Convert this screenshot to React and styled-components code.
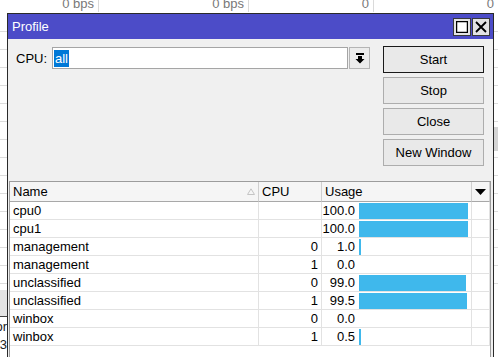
import React from 'react';
import styled, { createGlobalStyle } from 'styled-components';

const GlobalStyle = createGlobalStyle`
    html, body {
        margin: 0;
        padding: 0;
        background: #fff;
        overflow: hidden;
    }
    body {
        font-family: "Liberation Sans", Arial, sans-serif;
        font-size: 13px;
        color: #000;
    }
`;

const Desktop = styled.div`
    position: relative;
    width: 498px;
    height: 357px;
    overflow: hidden;
    background:
        repeating-linear-gradient(to bottom, transparent 0 17px, #dcdcdc 17px 18px) 0 14px / 100% 272px no-repeat,
        #fff;
`;

const BackHeader = styled.div`
    display: flex;
    height: 12px;
    overflow: hidden;
`;

const BackCell = styled.div`
    width: ${p => p.w}px;
    flex: none;
    box-sizing: border-box;
    text-align: right;
    padding-right: 4px;
    border-right: 1px solid #dadada;
    color: #777;
    line-height: 13px;
    margin-top: -3px;
`;

const BackBlock = styled.div`
    position: absolute;
    left: ${p => p.x}px;
    top: ${p => p.y}px;
    width: ${p => p.w}px;
    height: ${p => p.h}px;
    background: ${p => p.bg || '#d6d6d6'};
`;

const BackText = styled.div`
    position: absolute;
    left: 0;
    top: ${p => p.y}px;
    width: 7px;
    overflow: hidden;
    white-space: nowrap;
    direction: rtl;
    color: #222;
    line-height: 14px;
`;

const Window = styled.div`
    position: absolute;
    left: 7px;
    top: 13px;
    width: 487px;
    height: 370px;
    box-sizing: border-box;
    border: 1px solid #2a2a2a;
    background: #f0f0f0;
    display: flex;
    flex-direction: column;
`;

const TitleBar = styled.div`
    height: 25px;
    flex: none;
    background: #4c4cc8;
    color: #fff;
    display: flex;
    align-items: center;
    padding: 0 3px 0 4px;
`;

const Title = styled.span`
    flex: 1;
`;

const TitleButton = styled.div`
    width: 18px;
    height: 18px;
    box-sizing: border-box;
    border: 1px solid #3a3a3a;
    background: #e4e4e4;
    display: flex;
    align-items: center;
    justify-content: center;
    margin-left: 1px;
`;

const Body = styled.div`
    display: flex;
    padding: 7px 8px 0 8px;
    height: 142px;
    box-sizing: border-box;
`;

const Left = styled.div`
    flex: 1;
`;

const CpuRow = styled.div`
    display: flex;
    align-items: center;
    padding-top: 1px;
`;

const Label = styled.span`
    width: 36px;
`;

const Input = styled.div`
    width: 296px;
    height: 22px;
    box-sizing: border-box;
    border: 1px solid #a5a5a5;
    background: #fff;
    display: flex;
    align-items: center;
    padding-left: 1px;
`;

const Selected = styled.span`
    background: #0078d7;
    color: #fff;
    line-height: 17px;
    padding: 0 1px;
`;

const DropButton = styled.div`
    width: 21px;
    height: 22px;
    box-sizing: border-box;
    margin-left: 1px;
    border: 1px solid #b5b5b5;
    background: #ececec;
    display: flex;
    align-items: center;
    justify-content: center;
`;

const Buttons = styled.div`
    width: 101px;
    margin-right: 1px;
    display: flex;
    flex-direction: column;
    gap: 4px;
`;

const Button = styled.div`
    height: 27px;
    box-sizing: border-box;
    border: 1px solid ${p => (p.primary ? '#1a1a1a' : '#adadad')};
    background: #e9e9e9;
    display: flex;
    align-items: center;
    justify-content: center;
`;

const Table = styled.div`
    margin: 0 2px 0 1px;
    flex: 1;
    border: 1px solid #9c9c9c;
    border-bottom: none;
    background: #fff;
`;

const Grid = styled.div`
    display: grid;
    grid-template-columns: 249px 63px 150px 1fr;
`;

const HeadCell = styled.div`
    height: 20px;
    box-sizing: border-box;
    background: #f5f5f5;
    border-bottom: 1px solid #a8a8a8;
    border-right: 1px solid #cfcfcf;
    display: flex;
    align-items: center;
    padding: 0 3px;
    justify-content: ${p => p.center ? 'center' : 'space-between'};
    &:last-child { border-right: none; }
`;

const Cell = styled.div`
    height: 18px;
    box-sizing: border-box;
    border-bottom: 1px solid #e2e2e2;
    border-right: 1px solid #e2e2e2;
    display: flex;
    align-items: center;
    padding: 0 3px;
    justify-content: ${p => p.right ? 'flex-end' : 'flex-start'};
`;

const UsageCell = styled(Cell)`
    padding: 0;
`;

const Num = styled.span`
    width: 33px;
    text-align: right;
`;

const Bar = styled.div`
    height: 16px;
    margin-left: 4px;
    background: #3fb8ec;
`;

const rows = [
    { name: 'cpu0', cpu: '', usage: 100.0, bar: 109 },
    { name: 'cpu1', cpu: '', usage: 100.0, bar: 109 },
    { name: 'management', cpu: '0', usage: 1.0, bar: 2 },
    { name: 'management', cpu: '1', usage: 0.0, bar: 0 },
    { name: 'unclassified', cpu: '0', usage: 99.0, bar: 107 },
    { name: 'unclassified', cpu: '1', usage: 99.5, bar: 108 },
    { name: 'winbox', cpu: '0', usage: 0.0, bar: 0 },
    { name: 'winbox', cpu: '1', usage: 0.5, bar: 2 },
];

export default () => (
    <Desktop>
        <GlobalStyle />
        <BackHeader>
            <BackCell w={99}>0 bps</BackCell>
            <BackCell w={150}>0 bps</BackCell>
            <BackCell w={125}>0</BackCell>
            <BackCell w={125}>0</BackCell>
        </BackHeader>
        <BackBlock x={0} y={290} w={7} h={26} bg="#e4e4e4" />
        <BackBlock x={0} y={316} w={7} h={1} bg="#444" />
        <BackText y={320}>ror</BackText>
        <BackText y={338}>3.</BackText>
        <BackBlock x={494} y={127} w={4} h={24} bg="#d4d4d4" />

        <Window>
            <TitleBar>
                <Title>Profile</Title>
                <TitleButton>
                    <svg width="12" height="12" viewBox="0 0 12 12">
                        <rect x="0.5" y="0.5" width="11" height="11" fill="#fff" stroke="#000" strokeWidth="1.5" />
                    </svg>
                </TitleButton>
                <TitleButton>
                    <svg width="12" height="12" viewBox="0 0 12 12">
                        <path d="M1 1 L11 11 M11 1 L1 11" stroke="#000" strokeWidth="1.8" />
                    </svg>
                </TitleButton>
            </TitleBar>
            <Body>
                <Left>
                    <CpuRow>
                        <Label>CPU:</Label>
                        <Input><Selected>all</Selected></Input>
                        <DropButton>
                            <svg width="10" height="11" viewBox="0 0 10 11">
                                <rect x="1" y="0" width="8" height="2" fill="#000" />
                                <path d="M3 3 H7 V6 H9.5 L5 10.5 L0.5 6 H3 Z" fill="#000" />
                            </svg>
                        </DropButton>
                    </CpuRow>
                </Left>
                <Buttons>
                    <Button primary>Start</Button>
                    <Button>Stop</Button>
                    <Button>Close</Button>
                    <Button>New Window</Button>
                </Buttons>
            </Body>
            <Table>
                <Grid>
                    <HeadCell>
                        <span>Name</span>
                        <svg width="8" height="7" viewBox="0 0 8 7">
                            <path d="M0.5 6.5 L4 0.8 L7.5 6.5 Z" fill="none" stroke="#c4c4c4" />
                        </svg>
                    </HeadCell>
                    <HeadCell>CPU</HeadCell>
                    <HeadCell>Usage</HeadCell>
                    <HeadCell center>
                        <svg width="11" height="6" viewBox="0 0 11 6">
                            <path d="M0 0 H11 L5.5 6 Z" fill="#000" />
                        </svg>
                    </HeadCell>
                    {rows.map((r, i) => (
                        <React.Fragment key={i}>
                            <Cell>{r.name}</Cell>
                            <Cell right>{r.cpu}</Cell>
                            <UsageCell>
                                <Num>{r.usage.toFixed(1)}</Num>
                                {r.bar > 0 && <Bar style={{ width: r.bar }} />}
                            </UsageCell>
                            <Cell />
                        </React.Fragment>
                    ))}
                </Grid>
            </Table>
        </Window>
    </Desktop>
);
